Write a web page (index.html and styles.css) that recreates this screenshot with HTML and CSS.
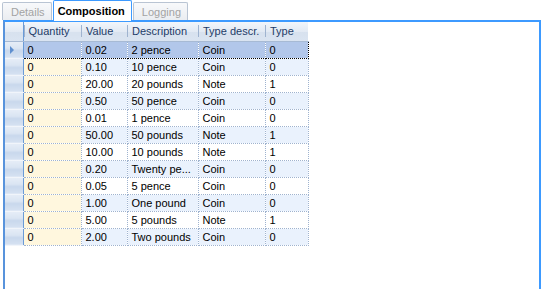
FILE: index.html
```html
<!DOCTYPE html>
<html lang="en">

<head>
    <meta charset="UTF-8">
    <title>Composition</title>
    <link rel="stylesheet" href="styles.css">
</head>

<body>
    <div class="tabs">
        <div class="tab">Details</div>
        <div class="tab active">Composition</div>
        <div class="tab">Logging</div>
    </div>

    <div class="panel">
        <table class="grid">
            <thead>
                <tr>
                    <th class="corner"></th>
                    <th class="c-qty"><span>Quantity</span></th>
                    <th class="c-val"><span>Value</span></th>
                    <th class="c-desc"><span>Description</span></th>
                    <th class="c-tdesc"><span>Type descr.</span></th>
                    <th class="c-type"><span>Type</span></th>
                </tr>
            </thead>
            <tbody>
                <tr class="selected">
                    <td class="rowhead"><span class="arrow"></span></td>
                    <td class="qty">0</td><td>0.02</td><td>2 pence</td><td>Coin</td><td>0</td>
                </tr>
                <tr class="alt">
                    <td class="rowhead"></td>
                    <td class="qty">0</td><td>0.10</td><td>10 pence</td><td>Coin</td><td>0</td>
                </tr>
                <tr>
                    <td class="rowhead"></td>
                    <td class="qty">0</td><td>20.00</td><td>20 pounds</td><td>Note</td><td>1</td>
                </tr>
                <tr class="alt">
                    <td class="rowhead"></td>
                    <td class="qty">0</td><td>0.50</td><td>50 pence</td><td>Coin</td><td>0</td>
                </tr>
                <tr>
                    <td class="rowhead"></td>
                    <td class="qty">0</td><td>0.01</td><td>1 pence</td><td>Coin</td><td>0</td>
                </tr>
                <tr class="alt">
                    <td class="rowhead"></td>
                    <td class="qty">0</td><td>50.00</td><td>50 pounds</td><td>Note</td><td>1</td>
                </tr>
                <tr>
                    <td class="rowhead"></td>
                    <td class="qty">0</td><td>10.00</td><td>10 pounds</td><td>Note</td><td>1</td>
                </tr>
                <tr class="alt">
                    <td class="rowhead"></td>
                    <td class="qty">0</td><td>0.20</td><td>Twenty pe...</td><td>Coin</td><td>0</td>
                </tr>
                <tr>
                    <td class="rowhead"></td>
                    <td class="qty">0</td><td>0.05</td><td>5 pence</td><td>Coin</td><td>0</td>
                </tr>
                <tr class="alt">
                    <td class="rowhead"></td>
                    <td class="qty">0</td><td>1.00</td><td>One pound</td><td>Coin</td><td>0</td>
                </tr>
                <tr>
                    <td class="rowhead"></td>
                    <td class="qty">0</td><td>5.00</td><td>5 pounds</td><td>Note</td><td>1</td>
                </tr>
                <tr class="alt">
                    <td class="rowhead"></td>
                    <td class="qty">0</td><td>2.00</td><td>Two pounds</td><td>Coin</td><td>0</td>
                </tr>
            </tbody>
        </table>
    </div>
</body>

</html>
```

FILE: styles.css
```css
body {
    margin: 0;
    background-color: #ffffff;
    font-family: 'Liberation Sans', Arial, sans-serif;
    font-size: 11px;
    color: #000000;
    overflow: hidden;
}

/* tab strip */
.tabs {
    display: flex;
    align-items: flex-end;
    height: 20px;
    padding-left: 2px;
}

.tab {
    box-sizing: border-box;
    height: 18px;
    padding: 3px 6px 0 8px;
    border: 1px solid #b9c4d3;
    border-bottom: none;
    border-radius: 2px 2px 0 0;
    background: linear-gradient(#f8f9fb, #eaedf1);
    color: #a3a3a3;
    font-size: 11px;
}

.tab.active {
    position: relative;
    height: 21px;
    margin: 0 1px -1px 1px;
    padding: 4px 6px 0 4px;
    border: 1px solid #3d9aff;
    border-bottom: none;
    background: #ffffff;
    color: #000000;
    font-weight: bold;
    z-index: 1;
}

/* tab page */
.panel {
    box-sizing: border-box;
    margin-left: 3px;
    width: 538px;
    height: 280px;
    border: 2px solid #3d9aff;
    border-left-color: #5893dc;
    padding: 0;
    background: #ffffff;
}

.grid {
    border-collapse: collapse;
    table-layout: fixed;
}

.grid th {
    box-sizing: border-box;
    height: 19px;
    padding: 0;
    background: linear-gradient(#f2f6fb, #e3eaf4 50%, #d7e1ee 51%, #dae4f1);
    border-bottom: 1px solid #a7bad4;
    color: #1e3c68;
    font-weight: normal;
    text-align: left;
}

.grid th span {
    display: block;
    padding-left: 4px;
    border-left: 1px solid #9fb3cf;
    line-height: 12px;
}

.grid th.corner {
    width: 18px;
    border-right: 1px solid #6a9bd8;
}

.c-qty { width: 58px; }
.c-val { width: 46px; }
.c-desc { width: 71px; }
.c-tdesc { width: 67px; }
.c-type { width: 43px; }

.grid td {
    box-sizing: border-box;
    height: 17px;
    padding: 0 0 0 4px;
    border-right: 1px dotted #9fb3cf;
    border-bottom: 1px dotted #9fb3cf;
    white-space: nowrap;
    overflow: hidden;
}

.grid tr.alt td {
    background-color: #eaf2fd;
}

.grid td.qty,
.grid tr.alt td.qty {
    background-color: #fff7de;
}

.grid tr.selected td {
    background-color: #b2c7ea;
    border-top: 1px dotted #000000;
    border-bottom: 1px dotted #000000;
}

.grid tr.selected td.qty {
    border-left: 1px dotted #000000;
}

.grid tr.selected td:last-child {
    border-right: 1px dotted #000000;
}

.grid td.rowhead,
.grid tr.alt td.rowhead,
.grid tr.selected td.rowhead {
    padding: 0;
    border-top: none;
    border-right: 1px solid #6a9bd8;
    border-bottom: 1px solid #f1f5fb;
    background: linear-gradient(#e6edf7, #d9e4f2 45%, #c8d7ec 55%, #d5e1f1);
}

.arrow {
    display: block;
    width: 0;
    height: 0;
    margin-left: 5px;
    border-top: 4px solid transparent;
    border-bottom: 4px solid transparent;
    border-left: 4px solid #5f8fcf;
}
```
